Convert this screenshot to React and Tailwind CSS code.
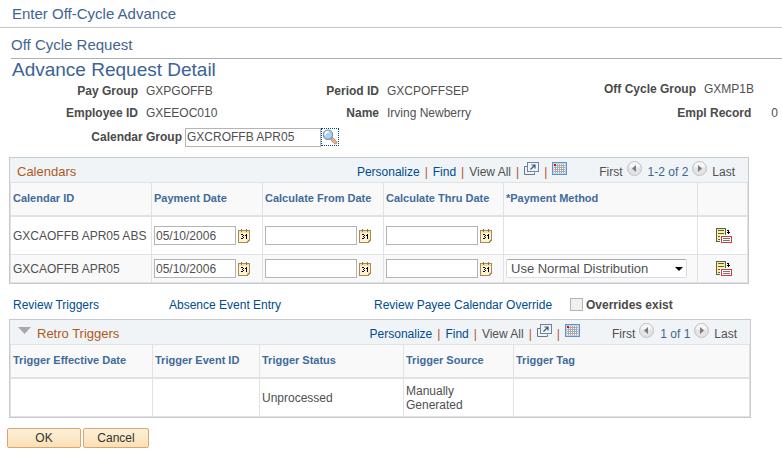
import React, { useState } from "react"

function LookupIcon() {
  return (
    <svg width="16" height="16" viewBox="0 0 16 16" fill="none">
      <path d="M9.5 9.5l4 4" stroke="#a08474" strokeWidth="3.4" strokeLinecap="round" />
      <path d="M10.2 10.2l3.2 3.2" stroke="#f2b07c" strokeWidth="2.2" strokeLinecap="round" />
      <circle cx="6" cy="5.8" r="4.6" fill="#a9d0f5" stroke="#8090a8" strokeWidth="1.2" />
      <path d="M3.2 5.5a3 3 0 0 1 2.800-2.800" stroke="#fff" strokeWidth="1.8" strokeLinecap="round" />
    </svg>
  )
}

function DateIcon() {
  return (
    <svg width="12" height="14" viewBox="0 0 12 14" shapeRendering="crispEdges">
      <path d="M0 1h12v10l-3 3H0z" fill="#a8895a" />
      <path d="M1 2h10v8H9v3H1z" fill="#fdf3d0" />
      <path d="M1 2h10v2H1z" fill="#f3dfa8" />
      <path d="M9 10h2v1H9zM9 11h1v1H9z" fill="#f6dfa0" />
      <path d="M3 0h1v3H3zM8 0h1v3H8z" fill="#8d7442" />
      <path d="M3 5h2v1H3zM5 6h1v1H5zM4 7h1v1H4zM5 8h1v1H5zM3 9h2v1H3zM8 5h1v5H8zM7 6h1v1H7z" fill="#000" />
    </svg>
  )
}

function DetailIcon() {
  return (
    <svg width="16" height="15" viewBox="0 0 16 15" shapeRendering="crispEdges">
      <path d="M0 0h10v14H0z" fill="#5c5c5c" />
      <path d="M1 1h8v12H1z" fill="#f7f48b" />
      <path d="M2 2h6v1H2zM2 5h6v1H2zM2 8h3v1H2zM2 11h2v1H2z" fill="#5c5c5c" />
      <path d="M4 7h12v8H4z" fill="#fff" />
      <path d="M5 8h11v7H5z" fill="#d8383c" />
      <path d="M6 9h9v5H6z" fill="#fff" />
      <path d="M7 10h7v1H7zM7 12h7v1H7z" fill="#777" />
      <path d="M11 2h2v1h-2zM12 3h1v3h-1zM11 4h3v1h-3z" fill="#000" />
    </svg>
  )
}

function PopupIcon() {
  return (
    <svg width="15" height="13" viewBox="0 0 15 13" fill="none">
      <path d="M3.5 4.5h-3v8h10v-2" stroke="#6b7480" />
      <rect x="3.5" y=".5" width="11" height="9" fill="#eef4fb" stroke="#6c82a6" />
      <path d="M6.5 7.5l4-4M7.5 3h3.5v3.5" stroke="#4a5567" strokeWidth="1.2" />
    </svg>
  )
}

function GridIcon() {
  const dots = []
  for (let y = 2; y <= 10; y += 2) {
    for (let x = 2; x <= 12; x += 2) dots.push([x, y])
  }
  return (
    <svg width="15" height="13" viewBox="0 0 15 13" shapeRendering="crispEdges">
      <path d="M0 0h15v13H0z" fill="#5b93d0" />
      <path d="M1 1h13v11H1z" fill="#c3d3e6" />
      <path d="M2 2h11v9H2z" fill="#a9a9ad" />
      {dots.map(([x, y]) => (
        <rect key={`${x}-${y}`} x={x} y={y} width="1" height="1" fill="#fff" />
      ))}
      <path d="M2 2h2v2H2z" fill="#f00" />
    </svg>
  )
}

function ArrowIcon({ next }) {
  return (
    <svg width="15" height="15" viewBox="0 0 15 15">
      <circle cx="7.5" cy="7.5" r="7" fill="#e3e3e3" stroke="#c2c2c2" />
      <path d="M2 6.5a5.5 5.5 0 0 1 11 0z" fill="#f6f6f6" />
      <path d={next ? "M6 4l4 3.5L6 11z" : "M9 4L5 7.5 9 11z"} fill="#7b7b7b" />
    </svg>
  )
}

function Bar() {
  return <span className="text-[#b5502f]">|</span>
}

function GridBar({ title, range, children }) {
  return (
    <div className="flex h-6 items-center justify-between bg-[#f0f4f6] pr-[13px] pl-[7px] pt-1">
      <div className="flex items-center gap-[6px]">
        {children}
        <h3 className="text-[13px] text-[#b0581d]">{title}</h3>
      </div>
      <div className="flex items-center whitespace-nowrap">
        <div className="mr-8 flex items-center gap-[5px]">
          <a href="#personalize" className="text-[#004b91]">Personalize</a>
          <Bar />
          <a href="#find" className="text-[#004b91]">Find</a>
          <Bar />
          <span>View All</span>
          <Bar />
          <button type="button" aria-label="Zoom grid" className="mb-2"><PopupIcon /></button>
          <Bar />
          <button type="button" aria-label="Download grid" className="mb-2"><GridIcon /></button>
        </div>
        <div className="flex items-center gap-1">
          <span>First</span>
          <button type="button" aria-label="Previous" className="mb-2"><ArrowIcon /></button>
          <span className="pl-[2px] text-[#426492]">{range}</span>
          <button type="button" aria-label="Next" className="mb-2"><ArrowIcon next /></button>
          <span className="pl-px">Last</span>
        </div>
      </div>
    </div>
  )
}

function Th({ children, label }) {
  return (
    <th
      scope="col"
      aria-label={label}
      className="h-[34px] border-r border-b-2 border-[#e2e2e4] bg-[#f9f9f9] pb-[2px] pl-[2px] text-left text-[11px] font-bold whitespace-nowrap text-[#426a9c]"
    >
      {children}
    </th>
  )
}

function Td({ children, className = "" }) {
  return <td className={`border-r border-b border-[#e2e2e4] pl-[2px] ${className}`}>{children}</td>
}

function DateField({ label, initial = "", width }) {
  const [value, setValue] = useState(initial)
  return (
    <div className="flex items-center gap-[2px]">
      <input
        type="text"
        aria-label={label}
        value={value}
        onChange={(e) => setValue(e.target.value)}
        className={`h-[19px] border border-[#b4b4b4] bg-white px-px text-[12px] ${width}`}
      />
      <button type="button" aria-label={`Choose ${label}`}><DateIcon /></button>
    </div>
  )
}

const calendars = [
  { id: "GXCAOFFB APR05 ABS", date: "05/10/2006", method: false, height: "h-[38px]", bg: "bg-white" },
  { id: "GXCAOFFB APR05", date: "05/10/2006", method: true, height: "h-[28px]", bg: "bg-[#f9f9f9]" },
]

function CalendarTable() {
  return (
    <section className="mr-[33px] ml-[9px] mt-[7px] border border-[#c5c9d0]">
      <GridBar title="Calendars" range="1-2 of 2" />
      <table className="w-full table-fixed border-separate border-spacing-0 border-t border-l border-[#e2e2e4]">
        <colgroup>
          <col className="w-[141px]" />
          <col className="w-[111px]" />
          <col className="w-[121px]" />
          <col className="w-[120px]" />
          <col />
          <col className="w-[50px]" />
        </colgroup>
        <thead>
          <tr>
            <Th>Calendar ID</Th>
            <Th>Payment Date</Th>
            <Th>Calculate From Date</Th>
            <Th>Calculate Thru Date</Th>
            <Th>*Payment Method</Th>
            <Th label="Details" />
          </tr>
        </thead>
        <tbody>
          {calendars.map((row) => (
            <tr key={row.id} className={`${row.height} ${row.bg}`}>
              <Td className="whitespace-nowrap">{row.id}</Td>
              <Td><DateField label="Payment Date" initial={row.date} width="w-[82px]" /></Td>
              <Td><DateField label="Calculate From Date" width="w-[92px]" /></Td>
              <Td><DateField label="Calculate Thru Date" width="w-[92px]" /></Td>
              <Td>
                {row.method && (
                  <div className="relative mr-[10px]">
                    <select aria-label="Payment Method" className="block h-[19px] w-full appearance-none rounded-xs border border-[#dadde3] border-t-[#a8abb0] bg-white pl-1 text-[13px] leading-4">
                      <option>Use Normal Distribution</option>
                      <option>Use Specified Distribution</option>
                    </select>
                    <svg className="pointer-events-none absolute top-2 right-1" width="8" height="4" viewBox="0 0 8 4">
                      <path d="M0 0h8L4 4z" fill="#000" />
                    </svg>
                  </div>
                )}
              </Td>
              <Td>
                <button type="button" aria-label="Calendar details" className="mx-auto block"><DetailIcon /></button>
              </Td>
            </tr>
          ))}
        </tbody>
      </table>
    </section>
  )
}

function TriggerTable() {
  const [open, setOpen] = useState(true)
  return (
    <section className="mr-[31px] ml-[9px] border border-[#c5c9d0]">
      <GridBar title="Retro Triggers" range="1 of 1">
        <button type="button" aria-label="Toggle Retro Triggers" aria-expanded={open} onClick={() => setOpen(!open)} className="mb-2 pl-px">
          <svg width="13" height="7" viewBox="0 0 13 7">
            <path d="M0 0h13L6.5 7z" fill="#a9a9a9" />
          </svg>
        </button>
      </GridBar>
      {open && (
        <table className="w-full table-fixed border-separate border-spacing-0 border-t border-l border-[#e2e2e4]">
          <colgroup>
            <col className="w-[142px]" />
            <col className="w-[107px]" />
            <col className="w-[144px]" />
            <col className="w-[110px]" />
            <col />
          </colgroup>
          <thead>
            <tr>
              <Th>Trigger Effective Date</Th>
              <Th>Trigger Event ID</Th>
              <Th>Trigger Status</Th>
              <Th>Trigger Source</Th>
              <Th>Trigger Tag</Th>
            </tr>
          </thead>
          <tbody>
            <tr className="h-[38px] bg-white">
              <Td />
              <Td />
              <Td>Unprocessed</Td>
              <Td className="pr-8 leading-[14px]">Manually Generated</Td>
              <Td />
            </tr>
          </tbody>
        </table>
      )}
    </section>
  )
}

function RequestFields() {
  const [group, setGroup] = useState("GXCROFFB APR05")
  return (
    <div>
      <div className="grid grid-cols-[138px_153px_72px_1fr_auto] gap-x-2 leading-[22px]">
        <b className="text-right text-[#4a4a4a]">Pay Group</b>
        <span>GXPGOFFB</span>
        <b className="text-right text-[#4a4a4a]">Period ID</b>
        <span>GXCPOFFSEP</span>
        <div className="flex gap-2 pr-7 leading-[18px]">
          <b className="text-[#4a4a4a]">Off Cycle Group</b>
          <span>GXMP1B</span>
        </div>
        <b className="text-right text-[#4a4a4a]">Employee ID</b>
        <span>GXEEOC010</span>
        <b className="text-right text-[#4a4a4a]">Name</b>
        <span>Irving Newberry</span>
        <div className="flex justify-end gap-5 pr-1">
          <b className="text-[#4a4a4a]">Empl Record</b>
          <span>0</span>
        </div>
      </div>
      <div className="flex h-[26px] items-center">
        <label htmlFor="calendar-group" className="mr-[3px] w-[182px] text-right font-bold text-[#4a4a4a]">Calendar Group</label>
        <input
          id="calendar-group"
          type="text"
          value={group}
          onChange={(e) => setGroup(e.target.value)}
          className="h-[19px] w-[136px] border border-[#b4b4b4] bg-white px-px text-[12px]"
        />
        <button type="button" aria-label="Look up Calendar Group" className="border border-dotted border-[#004b91]">
          <LookupIcon />
        </button>
      </div>
    </div>
  )
}

function App() {
  return (
    <main className="bg-white font-['Liberation_Sans',Arial,sans-serif] text-[12px] leading-4 text-[#505050]">
      <header className="flex h-7 items-center border-b border-[#c5c5c9] pl-3 text-[15px] text-[#426492]">
        Enter Off-Cycle Advance
      </header>
      <h2 className="ml-[11px] flex h-[31px] items-center border-b border-[#b0b0b0] pt-1 text-[15px] text-[#426492]">Off Cycle Request</h2>
      <h1 className="pl-3 text-[19px] leading-[21px] text-[#3d6296]">Advance Request Detail</h1>
      <RequestFields />
      <CalendarTable />
      <div className="flex h-[35px] items-center pt-[6px] pl-[13px] text-[#004b91]">
        <a href="#triggers" className="w-[156px]">Review Triggers</a>
        <a href="#absence" className="w-[205px]">Absence Event Entry</a>
        <a href="#overrides" className="w-[196px]">Review Payee Calendar Override</a>
        <label className="flex items-center gap-[3px] font-bold text-[#4a4a4a]">
          <input type="checkbox" className="size-[13px] appearance-none border border-[#b4b4b4] bg-[#f0f0f0] checked:bg-[#426492]" />
          Overrides exist
        </label>
      </div>
      <TriggerTable />
      <div className="mt-[10px] flex gap-[2px] pl-[7px] text-[#333]">
        <button type="button" className="h-5 w-[74px] rounded-xs border border-[#d9a671] bg-linear-to-b from-[#fdf0da] to-[#fbe0b4]">OK</button>
        <button type="button" className="h-5 w-[66px] rounded-xs border border-[#d9a671] bg-linear-to-b from-[#fdf0da] to-[#fbe0b4]">Cancel</button>
      </div>
    </main>
  )
}

export default App
